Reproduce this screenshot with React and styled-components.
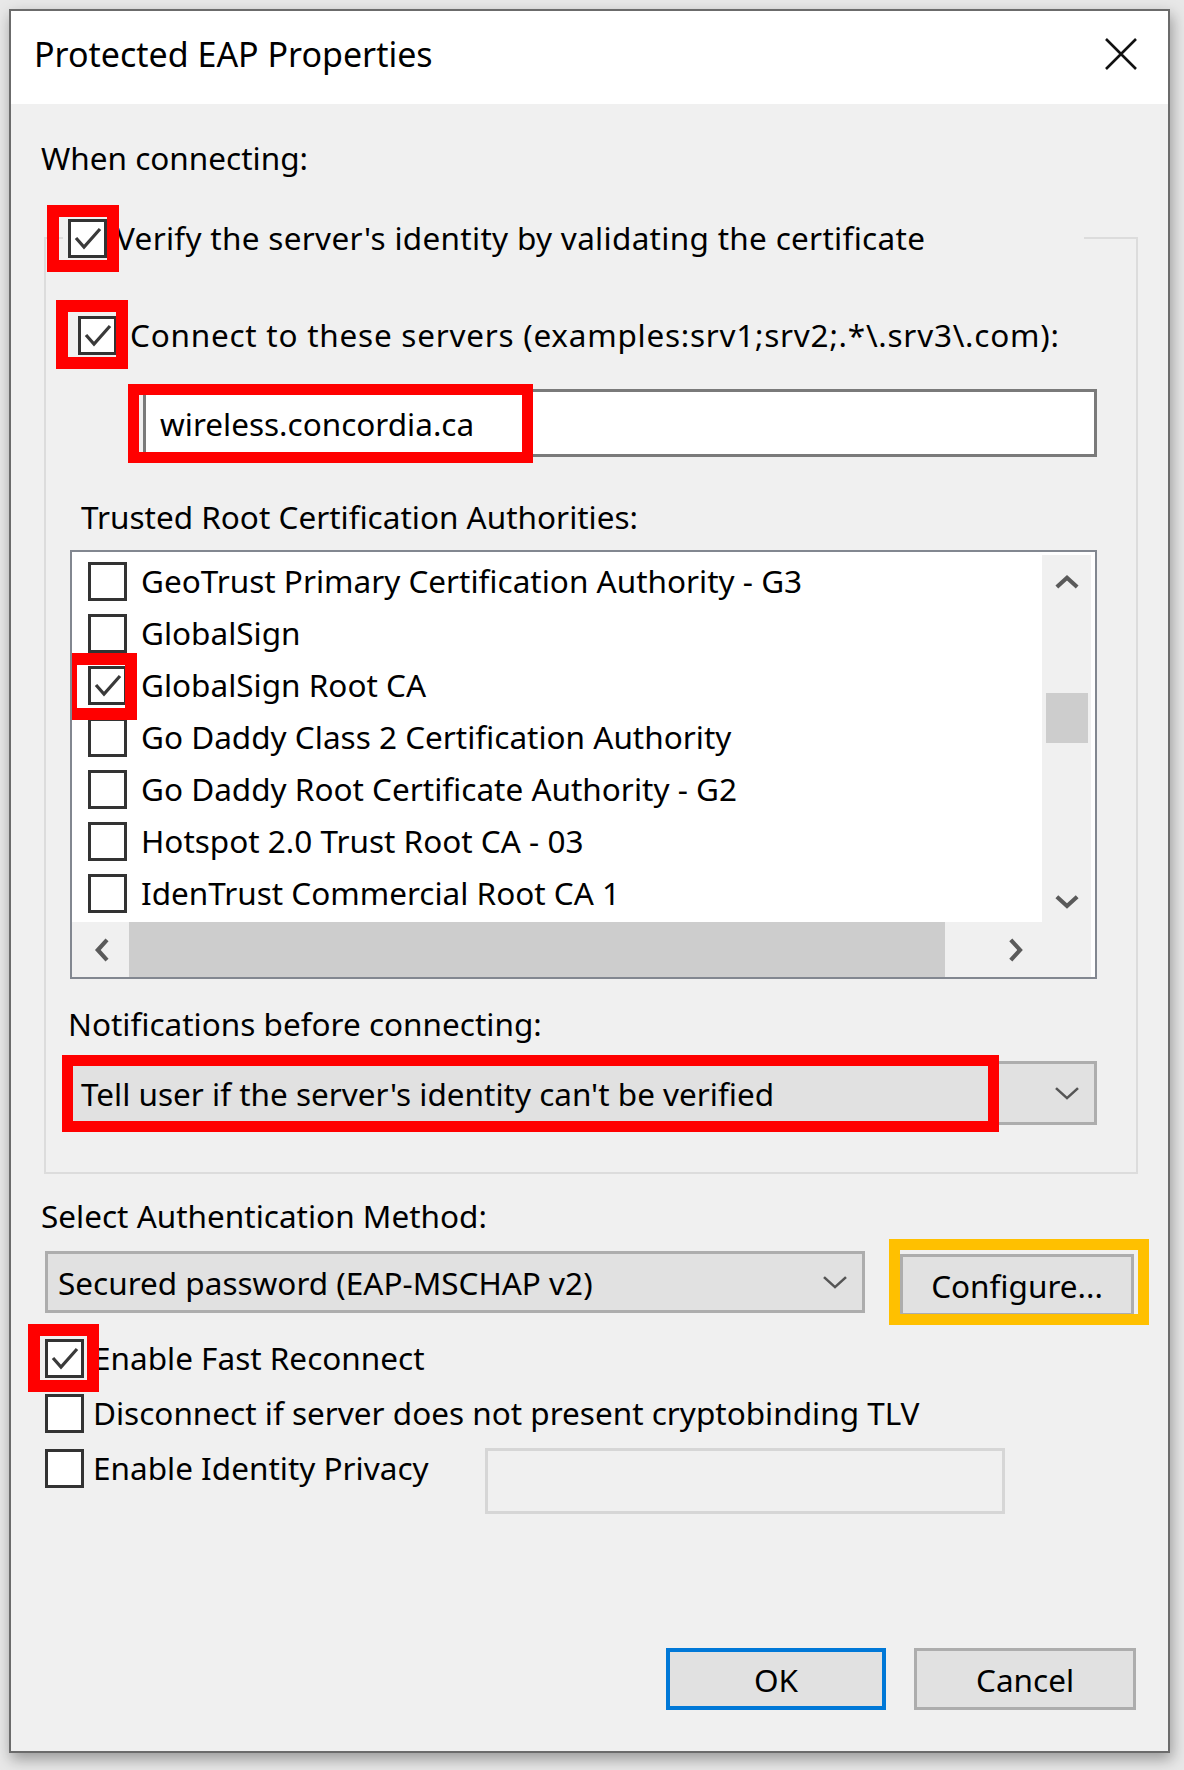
import React from "react";
import styled, { createGlobalStyle } from "styled-components";

const GlobalStyle = createGlobalStyle`
  * { box-sizing: border-box; }
  body {
    margin: 0;
    background: #e8e8e8;
    font-family: "Noto Sans", "Open Sans", sans-serif;
    color: #000;
  }
`;

const certs = [
  { name: "GeoTrust Primary Certification Authority - G3" },
  { name: "GlobalSign" },
  { name: "GlobalSign Root CA", checked: true, marked: true },
  { name: "Go Daddy Class 2 Certification Authority" },
  { name: "Go Daddy Root Certificate Authority - G2" },
  { name: "Hotspot 2.0 Trust Root CA - 03" },
  { name: "IdenTrust Commercial Root CA 1" },
];

const Check = ({ checked }) => (
  <Box>
    {checked && (
      <svg width="33" height="33" viewBox="0 0 33 33">
        <polyline
          points="5,16 13,25 29,7"
          fill="none"
          stroke="#3a3a3a"
          strokeWidth="3.2"
        />
      </svg>
    )}
  </Box>
);

const Chevron = ({ dir = "down", size = 26, stroke = 2.6, color = "#555" }) => {
  const pts = {
    down: "2,4 13,14 24,4",
    up: "2,14 13,4 24,14",
    left: "14,2 4,13 14,24",
    right: "4,2 14,13 4,24",
  }[dir];
  const vb = dir === "up" || dir === "down" ? "0 0 26 18" : "0 0 18 26";
  const w = dir === "up" || dir === "down" ? size : size * 0.7;
  const h = dir === "up" || dir === "down" ? size * 0.7 : size;
  return (
    <svg width={w} height={h} viewBox={vb}>
      <polyline points={pts} fill="none" stroke={color} strokeWidth={stroke} />
    </svg>
  );
};

const App = () => {
  return (
    <Screen>
      <GlobalStyle />
      <Dialog>
        <TitleBar>
          <Title>Protected EAP Properties</Title>
          <svg width="34" height="34" viewBox="0 0 34 34">
            <path d="M2 2 L32 32 M32 2 L2 32" stroke="#111" strokeWidth="2.6" />
          </svg>
        </TitleBar>

        <Body>
          <Label $top={33}>When connecting:</Label>

          <Group>
            <Legend>
              <Row>
                <Anchor>
                  <Check checked />
                  <Ring $l={-21} $t={-14} $w={72} $h={67} />
                </Anchor>
                <Text $gap={9} $spacing={0.3}>
                  Verify the server's identity by validating the certificate
                </Text>
              </Row>
            </Legend>

            <Row $top={55} $left={32}>
              <Anchor>
                <Check checked />
                <Ring $l={-22} $t={-16} $w={72} $h={69} />
              </Anchor>
              <Text $gap={13} $spacing={0.75}>
                Connect to these servers (examples:srv1;srv2;.*\.srv3\.com):
              </Text>
            </Row>

            <Anchor $block>
              <Input $top={33} $left={97}>wireless.concordia.ca</Input>
              <Ring $l={82} $t={28} $w={405} $h={79} $b={11} />
            </Anchor>

            <Label $top={39} $left={35}>
              Trusted Root Certification Authorities:
            </Label>

            <List>
              <ListRows>
                {certs.map((c) => (
                  <ListRow key={c.name}>
                    <Anchor>
                      <Check checked={c.checked} />
                      {c.marked && <Ring $l={-23} $t={-13} $w={72} $h={67} />}
                    </Anchor>
                    <Text $gap={14}>{c.name}</Text>
                  </ListRow>
                ))}
              </ListRows>
              <VScroll>
                <Chevron dir="up" size={24} stroke={4.5} color="#5a5a5a" />
                <VThumb />
                <Chevron dir="down" size={24} stroke={4.5} color="#5a5a5a" />
              </VScroll>
              <HScroll>
                <Chevron dir="left" size={24} stroke={4.5} color="#5a5a5a" />
                <HThumb />
                <Chevron dir="right" size={24} stroke={4.5} color="#5a5a5a" />
              </HScroll>
              <Corner />
            </List>

            <Label $top={24} $left={22}>
              Notifications before connecting:
            </Label>

            <Anchor $block>
              <Combo $top={16} $left={22} $width={1029} $height={64}>
                <span>Tell user if the server's identity can't be verified</span>
                <Chevron />
              </Combo>
              <Ring $l={16} $t={10} $w={937} $h={77} $b={11} />
            </Anchor>
          </Group>

          <Label $top={21}>Select Authentication Method:</Label>

          <AuthRow>
            <Combo $left={4} $width={820} $height={62}>
              <span>Secured password (EAP-MSCHAP v2)</span>
              <Chevron />
            </Combo>
            <Anchor>
              <Button $width={234}>Configure...</Button>
              <Ring $l={-11} $t={-12} $w={260} $h={86} $b={11} $c="#ffc000" />
            </Anchor>
          </AuthRow>

          <Row $top={21} $left={4}>
            <Anchor>
              <Check checked />
              <Ring $l={-17} $t={-15} $w={71} $h={68} />
            </Anchor>
            <Text $gap={9}>Enable Fast Reconnect</Text>
          </Row>

          <Row $top={13} $left={4}>
            <Check />
            <Text $gap={9}>Disconnect if server does not present cryptobinding TLV</Text>
          </Row>

          <PrivacyRow>
            <Row $left={4}>
              <Check />
              <Text $gap={9}>Enable Identity Privacy</Text>
            </Row>
            <DisabledField />
          </PrivacyRow>

          <Footer>
            <Button $width={220} $primary>
              OK
            </Button>
            <Button $width={222}>Cancel</Button>
          </Footer>
        </Body>
      </Dialog>
    </Screen>
  );
};

const Screen = styled.div`
  height: 1770px;
  padding: 9px 0 0 9px;
  overflow: hidden;
`;

const Dialog = styled.div`
  width: 1161px;
  height: 1744px;
  border: 2px solid #6b6b6b;
  background: #f0f0f0;
  display: flex;
  flex-direction: column;
  box-shadow: 2px 6px 14px rgba(0, 0, 0, 0.35);
`;

const TitleBar = styled.div`
  height: 93px;
  flex: none;
  background: #fff;
  display: flex;
  align-items: center;
  justify-content: space-between;
  padding: 0 30px 8px 23px;
`;

const Title = styled.div`
  font-size: 34px;
  line-height: 42px;
`;

const Body = styled.div`
  flex: 1;
  display: flex;
  flex-direction: column;
  align-items: flex-start;
  padding: 0 0 41px 30px;
  font-size: 31.5px;
`;

const Label = styled.div`
  line-height: 42px;
  height: 42px;
  white-space: nowrap;
  margin-top: ${(p) => p.$top || 0}px;
  margin-left: ${(p) => p.$left || 0}px;
`;

const Group = styled.fieldset`
  margin: 38px 0 0 3px;
  width: 1094px;
  border: 2px solid #dcdcdc;
  padding: 0 0 47px 0;
  min-inline-size: 0;
  display: flex;
  flex-direction: column;
  align-items: flex-start;
`;

const Legend = styled.legend`
  width: 1021px;
  margin-left: 17px;
  padding: 0 0 0 5px;
`;

const Row = styled.div`
  display: flex;
  align-items: center;
  height: 42px;
  white-space: nowrap;
  margin-top: ${(p) => p.$top || 0}px;
  margin-left: ${(p) => p.$left || 0}px;
`;

const Text = styled.span`
  line-height: 42px;
  margin-left: ${(p) => p.$gap || 10}px;
  letter-spacing: ${(p) => p.$spacing || 0}px;
  position: relative;
  z-index: 0;
`;

const Anchor = styled.span`
  position: relative;
  display: ${(p) => (p.$block ? "block" : "inline-flex")};
`;

const Ring = styled.span`
  position: absolute;
  z-index: 3;
  pointer-events: none;
  left: ${(p) => p.$l}px;
  top: ${(p) => p.$t}px;
  width: ${(p) => p.$w}px;
  height: ${(p) => p.$h}px;
  border: ${(p) => p.$b || 12}px solid ${(p) => p.$c || "#ff0000"};
`;

const Box = styled.span`
  width: 39px;
  height: 39px;
  flex: none;
  border: 3px solid #333;
  background: #fff;
  display: flex;
  align-items: center;
  justify-content: center;
`;

const Input = styled.div`
  width: 954px;
  height: 68px;
  margin-top: ${(p) => p.$top}px;
  margin-left: ${(p) => p.$left}px;
  border: 3px solid #7a7a7a;
  background: #fff;
  padding-left: 14px;
  display: flex;
  align-items: center;
`;

const List = styled.div`
  margin: 12px 0 0 24px;
  width: 1027px;
  height: 429px;
  border: 2px solid #828790;
  background: #fff;
  display: grid;
  grid-template-columns: 1fr 53px;
  grid-template-rows: 370px 1fr;
`;

const ListRows = styled.div`
  padding: 3px 0 0 16px;
  overflow: hidden;
`;

const ListRow = styled.div`
  height: 52px;
  display: flex;
  align-items: center;
  white-space: nowrap;
`;

const VScroll = styled.div`
  background: #f0f0f0;
  margin: 3px 4px 0 0;
  display: flex;
  flex-direction: column;
  align-items: center;
  padding: 19px 0 12px;
  & > svg:last-child {
    margin-top: auto;
  }
`;

const VThumb = styled.div`
  width: 42px;
  height: 50px;
  background: #cdcdcd;
  margin-top: 102px;
`;

const HScroll = styled.div`
  background: #f0f0f0;
  display: flex;
  align-items: center;
  padding: 0 18px 0 22px;
  & > svg:last-child {
    margin-left: auto;
  }
`;

const HThumb = styled.div`
  height: 100%;
  width: 816px;
  background: #cdcdcd;
  margin-left: 18px;
`;

const Corner = styled.div`
  background: #f0f0f0;
  margin-right: 4px;
`;

const Combo = styled.div`
  width: ${(p) => p.$width}px;
  height: ${(p) => p.$height}px;
  margin-top: ${(p) => p.$top || 0}px;
  margin-left: ${(p) => p.$left || 0}px;
  border: 3px solid #adadad;
  background: #e1e1e1;
  display: flex;
  align-items: center;
  justify-content: space-between;
  padding: 0 14px 0 10px;
  white-space: nowrap;
`;

const AuthRow = styled.div`
  display: flex;
  align-items: flex-start;
  gap: 35px;
  margin-top: 14px;
`;

const Button = styled.div`
  width: ${(p) => p.$width}px;
  height: 62px;
  border: ${(p) => (p.$primary ? "4px solid #0078d7" : "3px solid #adadad")};
  background: #e1e1e1;
  display: flex;
  align-items: center;
  justify-content: center;
  white-space: nowrap;
  ${AuthRow} & {
    margin-top: 3px;
  }
`;

const PrivacyRow = styled.div`
  display: flex;
  align-items: flex-start;
  margin-top: 13px;
  & > ${Row} {
    width: 440px;
  }
`;

const DisabledField = styled.div`
  width: 520px;
  height: 66px;
  margin-top: 1px;
  border: 3px solid #d6d6d6;
  background: #f0f0f0;
`;

const Footer = styled.div`
  margin-top: auto;
  align-self: stretch;
  display: flex;
  justify-content: flex-end;
  gap: 28px;
  padding-right: 32px;
`;

export default App;
